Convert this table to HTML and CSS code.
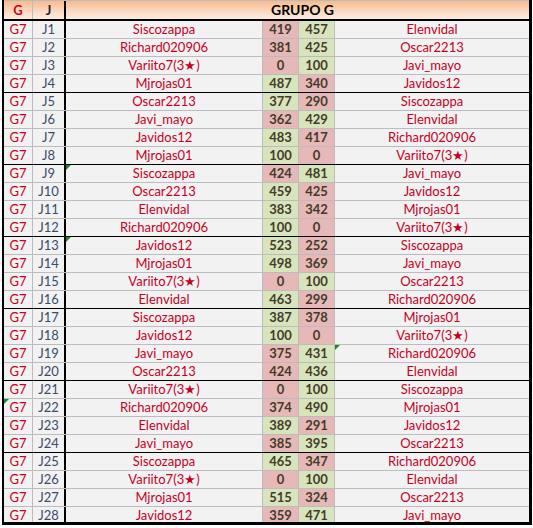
FILE: index.html
```html
<!DOCTYPE html>
<html>
<head>
<meta charset="utf-8">
<link rel="stylesheet" href="styles.css">
</head>
<body>
<div class="sheet">
  <div class="row head">
    <div class="c hg">G</div>
    <div class="c hj">J</div>
    <div class="c htitle">GRUPO G</div>
  </div>

  <div class="row"><div class="c g">G7</div><div class="c j">J1</div><div class="c n">Siscozappa</div><div class="c s l">419</div><div class="c s w">457</div><div class="c n">Elenvidal</div></div>
  <div class="row"><div class="c g">G7</div><div class="c j">J2</div><div class="c n">Richard020906</div><div class="c s l">381</div><div class="c s w">425</div><div class="c n">Oscar2213</div></div>
  <div class="row"><div class="c g">G7</div><div class="c j">J3</div><div class="c n">Variito7(3★)</div><div class="c s l">0</div><div class="c s w">100</div><div class="c n">Javi_mayo</div></div>
  <div class="row end"><div class="c g">G7</div><div class="c j">J4</div><div class="c n">Mjrojas01</div><div class="c s w">487</div><div class="c s l">340</div><div class="c n">Javidos12</div></div>

  <div class="row"><div class="c g">G7</div><div class="c j">J5</div><div class="c n">Oscar2213</div><div class="c s w">377</div><div class="c s l">290</div><div class="c n">Siscozappa</div></div>
  <div class="row"><div class="c g">G7</div><div class="c j">J6</div><div class="c n">Javi_mayo</div><div class="c s l">362</div><div class="c s w">429</div><div class="c n">Elenvidal</div></div>
  <div class="row"><div class="c g">G7</div><div class="c j">J7</div><div class="c n">Javidos12</div><div class="c s w">483</div><div class="c s l">417</div><div class="c n">Richard020906</div></div>
  <div class="row end"><div class="c g">G7</div><div class="c j">J8</div><div class="c n">Mjrojas01</div><div class="c s w">100</div><div class="c s l">0</div><div class="c n">Variito7(3★)</div></div>

  <div class="row"><div class="c g">G7</div><div class="c j">J9</div><div class="c n tri">Siscozappa</div><div class="c s l">424</div><div class="c s w">481</div><div class="c n">Javi_mayo</div></div>
  <div class="row"><div class="c g">G7</div><div class="c j">J10</div><div class="c n">Oscar2213</div><div class="c s w">459</div><div class="c s l">425</div><div class="c n">Javidos12</div></div>
  <div class="row"><div class="c g">G7</div><div class="c j">J11</div><div class="c n">Elenvidal</div><div class="c s w">383</div><div class="c s l">342</div><div class="c n">Mjrojas01</div></div>
  <div class="row end"><div class="c g">G7</div><div class="c j">J12</div><div class="c n">Richard020906</div><div class="c s w">100</div><div class="c s l">0</div><div class="c n">Variito7(3★)</div></div>

  <div class="row"><div class="c g">G7</div><div class="c j">J13</div><div class="c n tri">Javidos12</div><div class="c s w">523</div><div class="c s l">252</div><div class="c n">Siscozappa</div></div>
  <div class="row"><div class="c g">G7</div><div class="c j">J14</div><div class="c n">Mjrojas01</div><div class="c s w">498</div><div class="c s l">369</div><div class="c n">Javi_mayo</div></div>
  <div class="row"><div class="c g">G7</div><div class="c j">J15</div><div class="c n">Variito7(3★)</div><div class="c s l">0</div><div class="c s w">100</div><div class="c n">Oscar2213</div></div>
  <div class="row end"><div class="c g">G7</div><div class="c j">J16</div><div class="c n">Elenvidal</div><div class="c s w">463</div><div class="c s l">299</div><div class="c n">Richard020906</div></div>

  <div class="row"><div class="c g">G7</div><div class="c j">J17</div><div class="c n">Siscozappa</div><div class="c s w">387</div><div class="c s l">378</div><div class="c n">Mjrojas01</div></div>
  <div class="row"><div class="c g">G7</div><div class="c j">J18</div><div class="c n">Javidos12</div><div class="c s w">100</div><div class="c s l">0</div><div class="c n">Variito7(3★)</div></div>
  <div class="row"><div class="c g">G7</div><div class="c j">J19</div><div class="c n">Javi_mayo</div><div class="c s l">375</div><div class="c s w">431</div><div class="c n tri">Richard020906</div></div>
  <div class="row end"><div class="c g">G7</div><div class="c j">J20</div><div class="c n">Oscar2213</div><div class="c s l">424</div><div class="c s w">436</div><div class="c n">Elenvidal</div></div>

  <div class="row"><div class="c g">G7</div><div class="c j">J21</div><div class="c n">Variito7(3★)</div><div class="c s l">0</div><div class="c s w">100</div><div class="c n">Siscozappa</div></div>
  <div class="row"><div class="c g tri">G7</div><div class="c j">J22</div><div class="c n">Richard020906</div><div class="c s l">374</div><div class="c s w">490</div><div class="c n">Mjrojas01</div></div>
  <div class="row"><div class="c g">G7</div><div class="c j">J23</div><div class="c n">Elenvidal</div><div class="c s w">389</div><div class="c s l">291</div><div class="c n">Javidos12</div></div>
  <div class="row end"><div class="c g">G7</div><div class="c j">J24</div><div class="c n">Javi_mayo</div><div class="c s l">385</div><div class="c s w">395</div><div class="c n">Oscar2213</div></div>

  <div class="row"><div class="c g">G7</div><div class="c j">J25</div><div class="c n">Siscozappa</div><div class="c s w">465</div><div class="c s l">347</div><div class="c n">Richard020906</div></div>
  <div class="row"><div class="c g">G7</div><div class="c j">J26</div><div class="c n">Variito7(3★)</div><div class="c s l">0</div><div class="c s w">100</div><div class="c n">Elenvidal</div></div>
  <div class="row"><div class="c g">G7</div><div class="c j">J27</div><div class="c n">Mjrojas01</div><div class="c s w">515</div><div class="c s l">324</div><div class="c n">Oscar2213</div></div>
  <div class="row last"><div class="c g">G7</div><div class="c j">J28</div><div class="c n">Javidos12</div><div class="c s l">359</div><div class="c s w">471</div><div class="c n">Javi_mayo</div></div>
</div>
</body>
</html>
```

FILE: styles.css
```css
html, body {
  margin: 0;
  padding: 0;
  background: #ffffff;
}

.sheet {
  margin-left: 2px;
  width: 530px;
  box-sizing: border-box;
  border-left: 2px solid #000;
  border-right: 3px solid #000;
  background: #f2f2f2;
  font-family: Lato, "Open Sans", "Liberation Sans", sans-serif;
  font-size: 13px;
}

.row {
  display: grid;
  grid-template-columns: 29px 33px 197px 36px 36px 194px;
  height: 18px;
  box-sizing: border-box;
  border-bottom: 1px solid #bcbcbc;
}

.row.end {
  border-bottom-color: #000;
}

.row.last {
  border-bottom: 3px solid #000;
}

.c {
  box-sizing: border-box;
  border-right: 1px solid #bcbcbc;
  text-align: center;
  line-height: 17px;
  white-space: nowrap;
  overflow: hidden;
  position: relative;
}

.c:last-child {
  border-right: none;
}

.c.j {
  border-right: 2px solid #000;
  color: #3a4a68;
}

.c.g {
  color: #c8001e;
}

.c.n {
  color: #c4001f;
}

.c.s {
  font-weight: 700;
  color: #433b2a;
}

.c.w {
  background: #d8e4bc;
}

.c.l {
  background: #e6b8b7;
}

.tri::before {
  content: "";
  position: absolute;
  left: 0;
  top: 0;
  width: 0;
  height: 0;
  border-top: 5px solid #1e8a1e;
  border-right: 5px solid transparent;
}

.row.head {
  height: 21px;
  border-top: 1px solid #bcbcbc;
  border-bottom: 2px solid #000;
  grid-template-columns: 29px 33px 463px;
  background: linear-gradient(#f7bb8e, #fbe0cc 70%, #fdebde);
}

.head .c {
  line-height: 18px;
  font-weight: 700;
}

.hg {
  color: #d0001a;
}

.hj {
  border-right: 2px solid #000 !important;
  color: #1c2030;
}

.htitle {
  color: #000;
  font-size: 14px;
  padding-left: 10px;
}
```
